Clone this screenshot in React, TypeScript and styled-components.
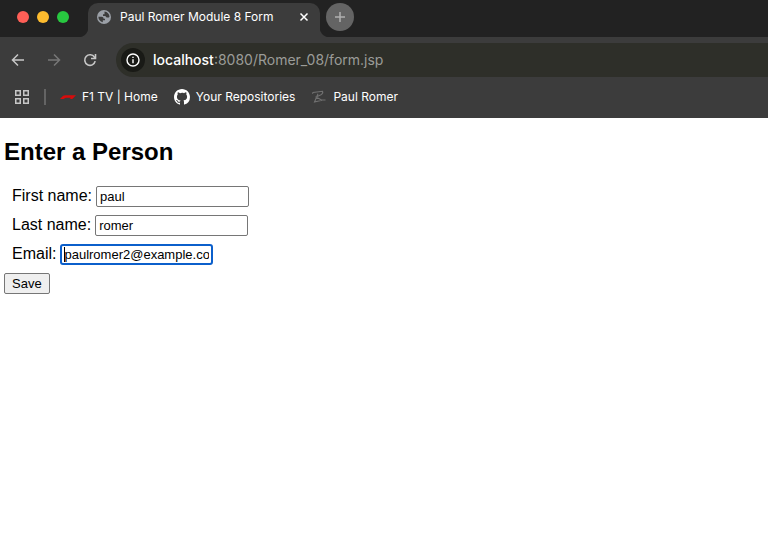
import React from 'react';
import styled, { createGlobalStyle } from 'styled-components';

const GlobalStyle = createGlobalStyle`
  *, *::before, *::after { box-sizing: border-box; }
  body {
    margin: 0;
    background: #fff;
    color: #000;
    font-family: "Liberation Sans", Helvetica, Arial, sans-serif;
  }
`;

const chrome = '#3c3c3c';
const strip = '#222222';

const Browser = styled.header`
  background: ${chrome};
  color: #fff;
  font-family: Inter, Roboto, sans-serif;
`;

const TabStrip = styled.div`
  display: flex;
  align-items: flex-start;
  height: 37px;
  padding-top: 3px;
  background: ${strip};
`;

const WindowControls = styled.div`
  display: flex;
  align-items: center;
  gap: 8px;
  width: 88px;
  height: 28px;
  padding-left: 17px;
`;

const Light = styled.button<{ $color: string }>`
  width: 12px;
  height: 12px;
  padding: 0;
  border: 0;
  border-radius: 50%;
  background: ${(p) => p.$color};
`;

const Tab = styled.div`
  position: relative;
  display: flex;
  align-items: flex-start;
  width: 232px;
  height: 34px;
  padding: 0 11px 0 9px;
  border-radius: 10px 10px 0 0;
  background: ${chrome};

  &::before,
  &::after {
    content: '';
    position: absolute;
    bottom: 0;
    width: 10px;
    height: 10px;
  }
  &::before {
    right: 100%;
    background: radial-gradient(circle at 0 0, transparent 10px, ${chrome} 11px);
  }
  &::after {
    left: 100%;
    background: radial-gradient(circle at 100% 0, transparent 10px, ${chrome} 11px);
  }
`;

const TabContent = styled.div`
  display: flex;
  flex: 1;
  align-items: center;
  gap: 9px;
  height: 28px;
`;

const TabTitle = styled.span`
  flex: 1;
  font-size: 12px;
  font-weight: 400;
  line-height: 16px;
  white-space: nowrap;
`;

const IconButton = styled.button`
  display: flex;
  align-items: center;
  justify-content: center;
  padding: 0;
  border: 0;
  background: none;
  color: inherit;
`;

const NewTab = styled(IconButton)`
  width: 28px;
  height: 28px;
  margin-left: 6px;
  border-radius: 50%;
  background: #646464;
  color: #b0b0b0;
`;

const Toolbar = styled.div`
  display: flex;
  align-items: center;
  padding-top: 6px;
`;

const NavButtons = styled.nav`
  display: flex;
  gap: 20px;
  width: 116px;
  padding-left: 10px;
`;

const NavButton = styled(IconButton)`
  width: 16px;
  height: 16px;
  color: #c7c7c7;

  &:disabled { color: #777; }
`;

const AddressBar = styled.div`
  display: flex;
  flex: 1;
  align-items: center;
  gap: 8px;
  height: 34px;
  padding-left: 5px;
  border-radius: 17px 0 0 17px;
  background: #2e2f29;
`;

const SiteInfo = styled(IconButton)`
  width: 24px;
  height: 24px;
  border-radius: 50%;
  background: #191a16;
`;

const Url = styled.div`
  color: #9b9c98;
  font-size: 14px;
  line-height: 20px;
  white-space: nowrap;
`;

const Host = styled.span`
  color: #fff;
  font-weight: 500;
`;

const Bookmarks = styled.nav`
  display: flex;
  align-items: center;
  height: 41px;
  padding: 0 14px 2px;
`;

const Divider = styled.span`
  width: 2px;
  height: 16px;
  margin: 0 14px;
  background: #646464;
`;

const BookmarkList = styled.div`
  display: flex;
  gap: 16px;
`;

const Bookmark = styled.a`
  display: flex;
  align-items: center;
  gap: 6px;
  color: #fff;
  font-size: 12px;
  font-weight: 400;
  line-height: 16px;
  text-decoration: none;
  white-space: nowrap;
`;

const Page = styled.main`
  padding: 0 4px;
`;

const Heading = styled.h1`
  margin: 0;
  padding: 20px 0;
  font-size: 24px;
  line-height: 28px;
`;

const Form = styled.form`
  display: flex;
  flex-direction: column;
  align-items: flex-start;
  gap: 8px;
`;

const Row = styled.div`
  display: flex;
  align-items: flex-start;
  gap: 4px;
  height: 21px;
  padding-left: 8px;
`;

const Label = styled.label`
  font-size: 16px;
  line-height: 20px;
`;

const Field = styled.span<{ $active?: boolean }>`
  position: relative;
  display: flex;

  &::after {
    content: '';
    display: ${(p) => (p.$active ? 'block' : 'none')};
    position: absolute;
    top: 3px;
    left: 4px;
    width: 1px;
    height: 15px;
    background: #000;
  }
`;

const Input = styled.input<{ $active?: boolean }>`
  width: 153px;
  height: 21px;
  padding: ${(p) => (p.$active ? '0 2px' : '1px 3px')};
  border: ${(p) => (p.$active ? '2px solid #0b5fcb' : '1px solid #767676')};
  border-radius: ${(p) => (p.$active ? '3px' : '2px')};
  outline: none;
  background: #fff;
  color: #000;
  font: 13px "Liberation Sans", Helvetica, Arial, sans-serif;
`;

const Save = styled.button`
  height: 21px;
  padding: 0 7px;
  border: 1px solid #767676;
  border-radius: 2px;
  background: #efefef;
  color: #000;
  font: 13px "Liberation Sans", Helvetica, Arial, sans-serif;
`;

const Globe = () => (
  <svg width="14" height="14" viewBox="0 0 14 14" aria-hidden="true">
    <circle cx="7" cy="7" r="7" fill="#9ba0a7" />
    <path
      d="M1.400 6.700H4.600Q6.600 6.900 6.700 8.700H8V10.300H5.800V12.200C3.200 11.700 1.300 9.500 1.400 6.700ZM7.500 1.500C10.300 1.800 12.400 4 12.500 6.700L11.800 7.500H9.900Q8.700 7.400 8.500 6H6V4.300H7.500Z"
      fill="#3c3c3c"
    />
  </svg>
);

const Close = () => (
  <svg width="10" height="10" viewBox="0 0 10 10" fill="none" stroke="currentColor" strokeWidth="1.5" aria-hidden="true">
    <path d="m1.500 1.500 7 7m0-7-7 7" />
  </svg>
);

const Plus = () => (
  <svg width="12" height="12" viewBox="0 0 12 12" fill="none" stroke="currentColor" strokeWidth="1.5" aria-hidden="true">
    <path d="M6 1v10M1 6h10" />
  </svg>
);

const Arrow = ({ forward = false }: { forward?: boolean }) => (
  <svg width="16" height="16" viewBox="0 0 16 16" fill="none" stroke="currentColor" strokeWidth="1.5" aria-hidden="true">
    <path d={forward ? 'M2 8h11M8 2.500 13.500 8 8 13.500' : 'M14 8H3M8 2.500 2.500 8 8 13.500'} />
  </svg>
);

const Reload = () => (
  <svg width="16" height="16" viewBox="0 0 16 16" fill="none" stroke="currentColor" strokeWidth="1.6" aria-hidden="true">
    <path d="M13.200 9.200A5.300 5.300 0 1 1 12.500 5.200L13.300 6.200" />
    <path d="M13.500 2v4.500H9" />
  </svg>
);

const Info = () => (
  <svg width="14" height="14" viewBox="0 0 14 14" aria-hidden="true">
    <circle cx="7" cy="7" r="6" fill="none" stroke="#fff" strokeWidth="1.4" />
    <path d="M6.300 6.200h1.400v4H6.300zM6.300 3.700h1.400v1.400H6.300z" fill="#fff" />
  </svg>
);

const Apps = () => (
  <svg width="16" height="16" viewBox="0 0 16 16" fill="none" stroke="#c7c7c7" strokeWidth="1.5" aria-hidden="true">
    <path d="M1.750 1.750h4.500v4.500h-4.500zM9.750 1.750h4.500v4.500h-4.500zM1.750 9.750h4.500v4.500h-4.500zM9.750 9.750h4.500v4.500h-4.500z" />
  </svg>
);

const F1 = () => (
  <svg width="16" height="16" viewBox="0 0 16 16" aria-hidden="true">
    <path
      d="M0 10 2.600 7.300Q3.700 6.200 5.400 6.200H16L12.300 10H9.800L11 8.700H6.200Q5 8.700 4.300 9.400L3.700 10Z"
      fill="#d80b0b"
    />
  </svg>
);

const GitHub = () => (
  <svg width="16" height="16" viewBox="0 0 16 16" fill="#fff" aria-hidden="true">
    <path d="M8 0C3.580 0 0 3.580 0 8c0 3.540 2.290 6.530 5.470 7.590.4.070.55-.17.55-.38 0-.19-.01-.82-.01-1.490-2.010.37-2.530-.49-2.690-.94-.09-.23-.48-.94-.82-1.130-.28-.15-.68-.52-.01-.53.63-.01 1.080.58 1.230.82.72 1.210 1.870.87 2.330.66.07-.52.28-.87.51-1.070-1.780-.2-3.640-.89-3.640-3.950 0-.87.31-1.590.82-2.150-.08-.2-.36-1.020.08-2.120 0 0 .67-.21 2.200.82A7.600 7.600 0 0 1 8 3.860c.68 0 1.360.09 2 .27 1.530-1.040 2.200-.82 2.200-.82.44 1.100.16 1.920.08 2.120.51.56.82 1.270.82 2.150 0 3.070-1.870 3.750-3.650 3.950.29.25.54.73.54 1.480 0 1.070-.01 1.930-.01 2.200 0 .21.15.46.55.38A8 8 0 0 0 16 8c0-4.420-3.580-8-8-8Z" />
  </svg>
);

const Monogram = () => (
  <svg width="16" height="16" viewBox="0 0 16 16" fill="none" stroke="#717171" strokeWidth="1.1" aria-hidden="true">
    <path d="M1.500 4.800 2 3.400 11.500 2.300Q12.500 4.400 10 5.800L5 8 10.500 11H14.500M7 4.800 3.500 13 11 11.300" />
  </svg>
);

export default function App() {
  return (
    <>
      <GlobalStyle />
      <Browser>
        <TabStrip>
          <WindowControls>
            <Light $color="#ff5f57" aria-label="Close window" />
            <Light $color="#febc2e" aria-label="Minimize window" />
            <Light $color="#28c840" aria-label="Zoom window" />
          </WindowControls>
          <Tab>
            <TabContent>
              <Globe />
              <TabTitle>Paul Romer Module 8 Form</TabTitle>
              <IconButton aria-label="Close tab"><Close /></IconButton>
            </TabContent>
          </Tab>
          <NewTab aria-label="New tab"><Plus /></NewTab>
        </TabStrip>
        <Toolbar>
          <NavButtons>
            <NavButton aria-label="Back"><Arrow /></NavButton>
            <NavButton aria-label="Forward" disabled><Arrow forward /></NavButton>
            <NavButton aria-label="Reload"><Reload /></NavButton>
          </NavButtons>
          <AddressBar>
            <SiteInfo aria-label="Site information"><Info /></SiteInfo>
            <Url><Host>localhost</Host>:8080/Romer_08/form.jsp</Url>
          </AddressBar>
        </Toolbar>
        <Bookmarks>
          <IconButton aria-label="Apps"><Apps /></IconButton>
          <Divider />
          <BookmarkList>
            <Bookmark href="#f1"><F1 />F1 TV | Home</Bookmark>
            <Bookmark href="#repositories"><GitHub />Your Repositories</Bookmark>
            <Bookmark href="#paul"><Monogram />Paul Romer</Bookmark>
          </BookmarkList>
        </Bookmarks>
      </Browser>
      <Page>
        <Heading>Enter a Person</Heading>
        <Form onSubmit={(e) => e.preventDefault()}>
          <Row>
            <Label htmlFor="first">First name:</Label>
            <Field><Input id="first" type="text" defaultValue="paul" /></Field>
          </Row>
          <Row>
            <Label htmlFor="last">Last name:</Label>
            <Field><Input id="last" type="text" defaultValue="romer" /></Field>
          </Row>
          <Row>
            <Label htmlFor="email">Email:</Label>
            <Field $active><Input $active id="email" type="text" defaultValue="paulromer2@example.com" /></Field>
          </Row>
          <Save type="submit">Save</Save>
        </Form>
      </Page>
    </>
  );
}
